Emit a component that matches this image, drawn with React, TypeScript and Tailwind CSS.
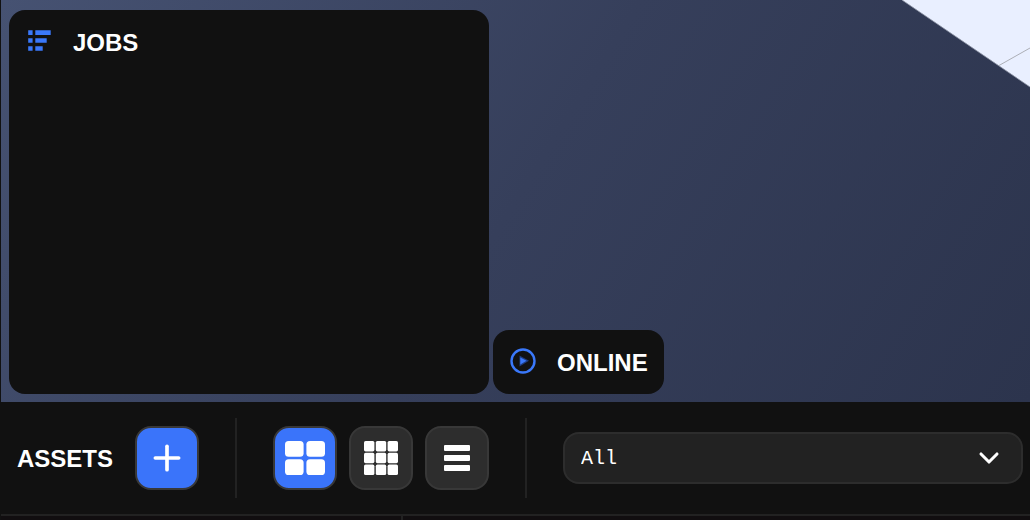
import React, { useState } from 'react';
import { ChevronDown, Plus } from 'lucide-react';
import clsx from 'clsx';

type ViewMode = 'large' | 'small' | 'list';

function JobsIcon() {
  return (
    <svg width="28" height="28" viewBox="0 0 28 28" fill="#3a78fa" aria-hidden="true">
      <path d="M3.2 2.3h4.4v4.7H3.2zM3.2 10.2h4.4v4.6H3.2zM3.2 18.2h4.4v4.6H3.2zM10.3 2.3h15.4v4.7H10.3zM10.3 10.2h11.4v4.6H10.3zM10.3 18.2h7.4v4.6H10.3z" />
    </svg>
  );
}

function OnlineIcon() {
  return (
    <svg width="28" height="28" viewBox="0 0 28 28" fill="none" aria-hidden="true">
      <circle cx="14" cy="13" r="11.5" stroke="#3a78fa" strokeWidth="2.4" />
      <path d="M10.5 7.5L20 12.7L10.5 18.5Z" fill="#1f3c80" />
      <path d="M11.3 9.6L17.5 12.7L11.3 16.4Z" fill="#3a78fa" />
    </svg>
  );
}

function LargeGridIcon() {
  return (
    <svg width="40" height="34" viewBox="0 0 40 34" fill="#fff" aria-hidden="true">
      <rect width="18.6" height="15.8" rx="3.6" />
      <rect x="21.4" width="18.6" height="15.8" rx="3.6" />
      <rect y="18.2" width="18.6" height="15.8" rx="3.6" />
      <rect x="21.4" y="18.2" width="18.6" height="15.8" rx="3.6" />
    </svg>
  );
}

function SmallGridIcon() {
  const cells = [0, 11.8, 23.6];

  return (
    <svg width="34" height="34" viewBox="0 0 34 34" fill="#fff" aria-hidden="true">
      {cells.map((y) =>
        cells.map((x) => <rect key={`${x}-${y}`} x={x} y={y} width="10.4" height="10.4" rx="1.6" />)
      )}
    </svg>
  );
}

function ListIcon() {
  return (
    <svg width="26" height="26" viewBox="0 0 26 26" fill="#fff" aria-hidden="true">
      <rect width="26" height="6" rx="1" />
      <rect y="10" width="26" height="6" rx="1" />
      <rect y="20" width="26" height="6" rx="1" />
    </svg>
  );
}

const VIEW_MODES: { id: ViewMode; label: string; icon: React.ReactNode }[] = [
  { id: 'large', label: 'Large grid', icon: <LargeGridIcon /> },
  { id: 'small', label: 'Small grid', icon: <SmallGridIcon /> },
  { id: 'list', label: 'List', icon: <ListIcon /> },
];

function Title({ children }: { children: string }) {
  return <h2 className="pt-0.5 text-2xl font-bold">{children}</h2>;
}

function Divider() {
  return <div className="h-20 w-0.5 shrink-0 bg-[#222222]" />;
}

function Viewport() {
  return (
    <section className="relative flex items-end gap-1 overflow-hidden bg-linear-[122deg] from-[#465272] via-[#363f5b] to-[#2c344d] px-2 pt-2.5 pb-2">
      {/* Corner of the scene floor */}
      <svg width="130" height="90" viewBox="0 0 130 90" className="absolute top-0 right-0" aria-hidden="true">
        <path d="M2 0H130V87Z" fill="#e9efff" />
        <path d="M2 0L130 87" stroke="#8d93a3" strokeWidth="0.8" />
        <path d="M99 65.5L130 48" stroke="#a5a7ae" strokeWidth="0.9" />
      </svg>

      <div className="h-96 w-120 rounded-2xl bg-[#111111]">
        <div className="flex h-16 items-center gap-5 px-4">
          <JobsIcon />
          <Title>JOBS</Title>
        </div>
      </div>
      <div className="flex h-16 items-center gap-5 rounded-2xl bg-[#111111] px-4">
        <OnlineIcon />
        <Title>ONLINE</Title>
      </div>
    </section>
  );
}

function AssetsBar() {
  const [viewMode, setViewMode] = useState<ViewMode>('large');
  const [filter, setFilter] = useState('All');

  return (
    <section className="flex items-center gap-9 border-b-2 border-[#222222] py-4 pr-[7px] pl-4">
      <div className="flex items-center gap-[22px]">
        <Title>ASSETS</Title>
        <button
          aria-label="Add asset"
          className="flex size-16 items-center justify-center rounded-2xl border-2 border-[#383838] bg-[#3a74fa]"
        >
          <Plus size={40} strokeWidth={2.2} />
        </button>
      </div>

      <Divider />

      <div className="flex gap-3">
        {VIEW_MODES.map(({ id, label, icon }) => (
          <button
            key={id}
            aria-label={label}
            aria-pressed={viewMode === id}
            onClick={() => setViewMode(id)}
            className={clsx(
              'flex size-16 items-center justify-center rounded-2xl border-2 border-[#383838]',
              viewMode === id ? 'bg-[#3a74fa]' : 'bg-[#2d2d2d]'
            )}
          >
            {icon}
          </button>
        ))}
      </div>

      <Divider />

      <div className="relative flex-1">
        <select
          aria-label="Asset type"
          value={filter}
          onChange={(e) => setFilter(e.target.value)}
          className="block h-13 w-full appearance-none rounded-2xl border-2 border-[#2d2d2d] bg-[#222222] px-4 pt-0.5 font-['Liberation_Mono',monospace] text-xl"
        >
          <option>All</option>
        </select>
        <ChevronDown
          size={32}
          strokeWidth={2.3}
          className="pointer-events-none absolute inset-y-0 right-[18px] my-auto"
        />
      </div>
    </section>
  );
}

export default function App() {
  return (
    <div className="flex min-h-screen flex-col border-l border-[#111111] bg-[#111111] font-['Liberation_Sans',Arial,sans-serif] text-white">
      <Viewport />
      <AssetsBar />
      <div className="flex grow bg-[#110e10]">
        <div className="w-[402px] border-r-2 border-[#222222]" />
      </div>
    </div>
  );
}
